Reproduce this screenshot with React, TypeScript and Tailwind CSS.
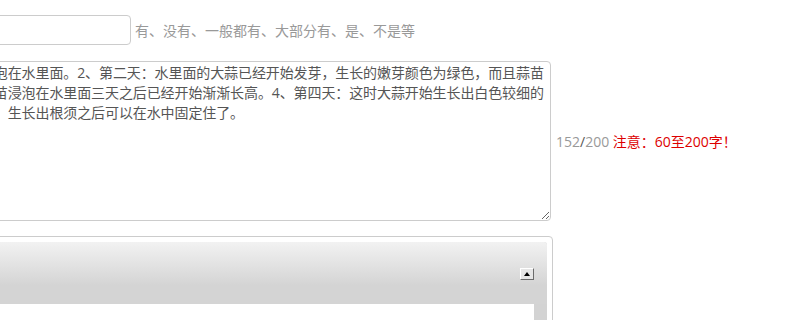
import React from "react";

const lines = [
  "大蒜泡在水里面。2、第二天：水里面的大蒜已经开始发芽，生长的嫩芽颜色为绿色，而且蒜苗",
  "鲜嫩苗浸泡在水里面三天之后已经开始渐渐长高。4、第四天：这时大蒜开始生长出白色较细的",
  "根须，生长出根须之后可以在水中固定住了。",
];

const App = () => {
  return (
    <div className="w-[800px] h-[320px] overflow-hidden bg-white font-['Open_Sans','Noto_Sans_CJK_SC',sans-serif]">
      <div className="-ml-[47px] pt-[15px] flex flex-col">
        <div className="flex items-center">
          <input
            type="text"
            className="w-[178px] h-[30px] border border-[#ccc] rounded-[4px] px-[12px] text-[14px] text-[#555] outline-none"
          />
          <span className="ml-[4px] text-[14px] text-[#999]">
            有、没有、一般都有、大部分有、是、不是等
          </span>
        </div>

        <div className="flex items-center mt-[16px]">
          <textarea
            readOnly
            wrap="off"
            defaultValue={lines.join("\n")}
            className="w-[598px] h-[160px] border border-[#ccc] rounded-[4px] px-[12px] pt-[1px] text-[14px] leading-[20px] tracking-[-0.1px] text-[#555] whitespace-pre overflow-hidden outline-none"
          />
          <span className="ml-[5px] text-[14px] whitespace-nowrap">
            <span className="text-[#999]">152</span>
            <span className="text-[#555]">/</span>
            <span className="text-[#999]">200</span>{" "}
            <span className="text-[#dd0000]">注意：60至200字！</span>
          </span>
        </div>

        <div className="mt-[15px] w-[600px] h-[120px] border border-[#ccc] rounded-[4px] p-[5px]">
          <div className="h-full bg-[#d3d3d3] rounded-t-[3px] flex flex-col">
            <div className="h-[62px] shrink-0 rounded-t-[3px] bg-[linear-gradient(to_bottom,#f2f2f2,#d4d4d4_70%)] flex justify-end pt-[26px] pr-[13px]">
              <button className="w-[14px] h-[12px] flex items-center justify-center bg-[#e6e6e6] border border-t-white border-l-white border-r-[#6b6b6b] border-b-[#6b6b6b]">
                <svg width="6" height="4" viewBox="0 0 6 4">
                  <path d="M3 0 L6 4 L0 4 Z" fill="#000" />
                </svg>
              </button>
            </div>
            <div className="flex-1 bg-white mr-[13px]" />
          </div>
        </div>
      </div>
    </div>
  );
};

export default App;
